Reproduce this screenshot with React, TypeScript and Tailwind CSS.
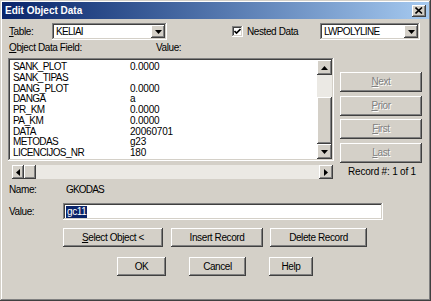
import React from "react";

const raised =
  "shadow-[inset_-1px_-1px_#404040,inset_1px_1px_#ffffff,inset_-2px_-2px_#808080,inset_2px_2px_#d4d0c8]";
const sunken =
  "shadow-[inset_-1px_-1px_#ffffff,inset_1px_1px_#808080,inset_-2px_-2px_#d4d0c8,inset_2px_2px_#404040]";

const fields: [string, string][] = [
  ["SANK_PLOT", "0.0000"],
  ["SANK_TIPAS", ""],
  ["DANG_PLOT", "0.0000"],
  ["DANGA", "a"],
  ["PR_KM", "0.0000"],
  ["PA_KM", "0.0000"],
  ["DATA", "20060701"],
  ["METODAS", "g23"],
  ["LICENCIJOS_NR", "180"],
];

const Arrow = ({ dir }: { dir: "up" | "down" | "left" | "right" }) => {
  const pts = {
    up: "0,4 7,4 3.5,0",
    down: "0,0 7,0 3.5,4",
    left: "4,0 4,7 0,3.5",
    right: "0,0 0,7 4,3.5",
  }[dir];
  const vertical = dir === "up" || dir === "down";
  return (
    <svg width={vertical ? 7 : 4} height={vertical ? 4 : 7} viewBox={vertical ? "0 0 7 4" : "0 0 4 7"}>
      <polygon points={pts} fill="#000" />
    </svg>
  );
};

const Combo = ({ value, className }: { value: string; className: string }) => (
  <div className={`${className} h-[17px] bg-white flex items-center ${sunken}`}>
    <span className="flex-1 pl-[4px] tracking-[-0.7px] leading-[13px]">{value}</span>
    <div className={`w-[14px] h-[13px] mr-[2px] bg-[#d4d0c8] flex items-center justify-center ${raised}`}>
      <Arrow dir="down" />
    </div>
  </div>
);

const Button = ({
  children,
  className,
  disabled,
}: {
  children: React.ReactNode;
  className: string;
  disabled?: boolean;
}) => (
  <div
    className={`${className} flex items-center justify-center bg-[#d4d0c8] ${raised} ${
      disabled ? "text-[#808080] [text-shadow:1px_1px_0_#ffffff]" : "text-black"
    }`}
  >
    {children}
  </div>
);

const U = ({ children }: { children: React.ReactNode }) => (
  <span className="underline underline-offset-[1px]">{children}</span>
);

export default function App() {
  return (
    <div
      className={`w-[431px] h-[301px] bg-[#d4d0c8] p-[2px] font-['Liberation_Sans',Arial,sans-serif] text-[10px] tracking-[-0.4px] text-black leading-[12px] ${"shadow-[inset_-1px_-1px_#404040,inset_1px_1px_#d4d0c8,inset_-2px_-2px_#808080,inset_2px_2px_#ffffff]"}`}
    >
      {/* title bar */}
      <div className="h-[17px] flex items-center bg-gradient-to-r from-[#0a246a] to-[#a6caf0] pl-[3px] pr-[3px]">
        <span className="flex-1 text-white font-bold tracking-normal text-[10px]">Edit Object Data</span>
        <div className={`w-[14px] h-[12px] bg-[#d4d0c8] flex items-center justify-center ${raised}`}>
          <svg width="8" height="7" viewBox="0 0 8 7">
            <path d="M0.5 0.5 L7 6.5 M7 0.5 L0.5 6.5" stroke="#000" strokeWidth="1.6" />
          </svg>
        </div>
      </div>

      <div className="pl-[6px]">
        {/* table row */}
        <div className="mt-[4px] h-[17px] flex items-center">
          <span className="w-[44px] pl-[1px]">
            <U>T</U>able:
          </span>
          <Combo value="KELIAI" className="w-[115px]" />
          <div className={`ml-[65px] w-[11px] h-[11px] bg-white flex items-center justify-center ${sunken}`}>
            <svg width="7" height="7" viewBox="0 0 7 7">
              <path d="M0.5 3 L2.5 5 L6.5 1" stroke="#000" strokeWidth="1.6" fill="none" />
            </svg>
          </div>
          <span className="ml-[4px] w-[73px]">Nested Data</span>
          <Combo value="LWPOLYLINE" className="w-[100px]" />
        </div>

        {/* column labels */}
        <div className="mt-[1px] h-[13px] flex items-center">
          <span className="w-[148px] pl-[1px]">
            <U>O</U>bject Data Field:
          </span>
          <span>Value:</span>
        </div>

        {/* list + side buttons */}
        <div className="mt-[4px] h-[122px] flex">
          <div className="w-[326px] flex flex-col">
            <div className={`h-[103px] bg-white flex p-[2px] ${sunken}`}>
              <div className="flex-1 pt-[2px] pl-[3px] tracking-[-0.6px]">
                {fields.map(([name, value]) => (
                  <div key={name} className="flex h-[10.75px] leading-[10.75px]">
                    <span className="w-[117px]">{name}</span>
                    <span className="tracking-[-0.2px]">{value}</span>
                  </div>
                ))}
              </div>
              <div className="w-[15px] flex flex-col">
                <div className={`h-[15px] bg-[#d4d0c8] flex items-center justify-center ${raised}`}>
                  <Arrow dir="up" />
                </div>
                <div className="h-[22px] bg-[#ebe9e4]" />
                <div className={`flex-1 bg-[#d4d0c8] ${raised}`} />
                <div className={`h-[15px] bg-[#d4d0c8] flex items-center justify-center ${raised}`}>
                  <Arrow dir="down" />
                </div>
              </div>
            </div>
            <div className="mt-[4px] ml-[4px] w-[321px] h-[14px] flex">
              <div className={`w-[12px] bg-[#d4d0c8] flex items-center justify-center ${raised}`}>
                <Arrow dir="left" />
              </div>
              <div className={`w-[12px] bg-[#d4d0c8] ${raised}`} />
              <div className="flex-1 bg-[#ebe9e4]" />
              <div className={`w-[14px] bg-[#d4d0c8] flex items-center justify-center ${raised}`}>
                <Arrow dir="right" />
              </div>
            </div>
          </div>

          <div className="ml-[6px] flex flex-col">
            <Button disabled className="mt-[14px] w-[82px] h-[20px]">
              <U>N</U>ext
            </Button>
            <Button disabled className="mt-[4px] w-[82px] h-[20px]">
              <U>P</U>rior
            </Button>
            <Button disabled className="mt-[3px] w-[82px] h-[20px]">
              <U>F</U>irst
            </Button>
            <Button disabled className="mt-[4px] w-[82px] h-[20px]">
              <U>L</U>ast
            </Button>
            <span className="mt-[3px] ml-[8px] tracking-[-0.2px]">Record #: 1 of 1</span>
          </div>
        </div>

        {/* name */}
        <div className="mt-[4px] h-[12px] flex items-center">
          <span className="w-[58px] pl-[1px]">Name:</span>
          <span className="tracking-[-0.8px]">GKODAS</span>
        </div>

        {/* value */}
        <div className="mt-[7px] h-[17px] flex items-center">
          <span className="w-[55px] pl-[1px]">Value:</span>
          <div className={`w-[320px] h-[17px] bg-white flex items-center pl-[3px] ${sunken}`}>
            <span className="bg-[#0a246a] text-white px-[1px] leading-[12px]">gc11</span>
          </div>
        </div>

        {/* record buttons */}
        <div className="mt-[8px] h-[19px] flex pl-[55px] gap-[8px]">
          <Button className="w-[100px] h-[19px]">
            <span>
              <U>S</U>elect Object &lt;
            </span>
          </Button>
          <Button className="w-[92px] h-[19px]">Insert Record</Button>
          <Button className="w-[97px] h-[19px] -ml-[1px]">Delete Record</Button>
        </div>

        {/* dialog buttons */}
        <div className="mt-[10px] h-[19px] flex pl-[109px] gap-[23px]">
          <Button className="w-[49px] h-[19px]">OK</Button>
          <Button className="w-[57px] h-[19px]">Cancel</Button>
          <Button className="w-[44px] h-[19px]">Help</Button>
        </div>
      </div>
    </div>
  );
}
